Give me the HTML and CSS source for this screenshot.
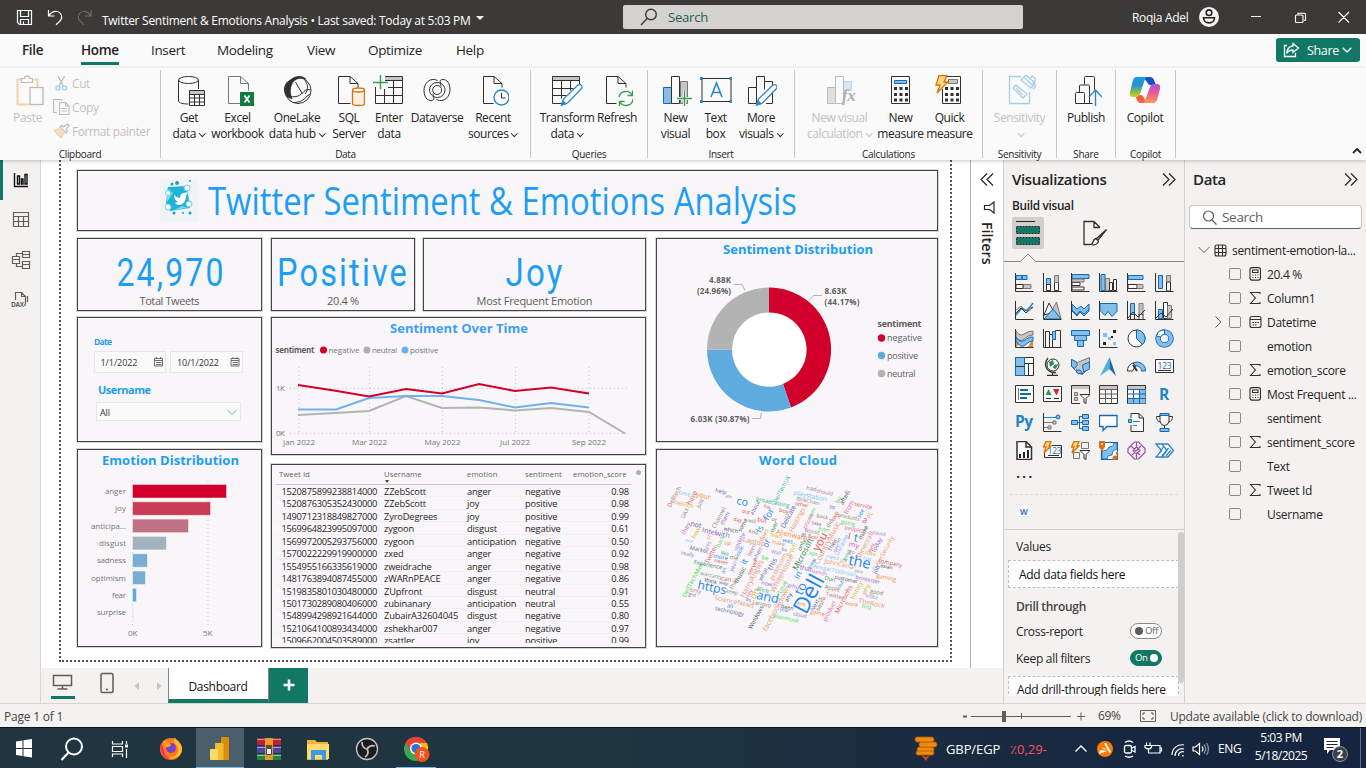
FILE: index.html
```html
<!DOCTYPE html>
<html lang="en">
<head>
<meta charset="utf-8">
<title>Twitter Sentiment &amp; Emotions Analysis</title>
<link rel="stylesheet" href="styles.css">
</head>
<body>
<div class="app">
  <header class="titlebar">
    <div class="tb-left">
      <svg width="94" height="34" fill="none" stroke="#fff" stroke-width="1.2">
        <path d="M17.500 10.500h14v14h-12l-2-2zM20.500 10.500v6h8v-6M20.500 24.500v-5h8v5M23.500 21.500v3"/>
        <path d="M48.500 10v6h6M49 15.500c3-5 9-5.500 11.500-2s1 6-1 8l-3.500 3.200"/>
        <path stroke="#6d6c6b" d="M91 10v6h-6M90.500 15.500c-3-5-8.500-5.500-11-2s-1 6 1 8l3.500 3.200"/>
      </svg>
      <span class="doc">Twitter Sentiment &amp; Emotions Analysis • Last saved: Today at 5:03 PM</span>
      <i class="caret"></i>
    </div>
    <div class="tb-search"><svg width="20" height="20" fill="none" stroke="#3b3a39" stroke-width="1.4"><circle cx="12" cy="7.500" r="5.300"/><path d="M8.200 11.500L2 18"/></svg>Search</div>
    <div class="tb-right">
      <span class="user">Roqia Adel</span>
      <svg width="20" height="20"><circle cx="10" cy="10" r="10" fill="#f3f2f1"/><g fill="none" stroke="#222" stroke-width="1.600"><circle cx="10" cy="5.700" r="2.800"/><path d="M4.500 10.800h11c0 6.700-11 6.700-11 0z"/></g></svg>
      <svg class="win" width="100" height="14" fill="none" stroke="#fff" stroke-width="1.100"><path d="M0 6.500h10M87.500 2l10.500 10.500M98 2L87.500 12.500M47 4.500V3.300h6.500q1 0 1 1v6h-1.500"/><rect x="44.500" y="5" width="7.500" height="7.500" rx="1"/></svg>
    </div>
  </header>

  <nav class="menu">
    <b>File</b><b class="on">Home</b><span>Insert</span><span>Modeling</span><span>View</span><span>Optimize</span><span>Help</span>
    <div class="share"><svg width="17" height="16" fill="none" stroke="#fff" stroke-width="1.300"><path d="M4 3.500H1.500v11h11V11"/><path d="M10 1.500l5.500 4.500-5.500 4.500V8C7 8 5 9 3.800 11.500 4 7 6.500 4.300 10 4z"/></svg><span>Share</span><svg width="10" height="8" fill="none" stroke="#fff" stroke-width="1.300"><path d="M.7 1.700l4.300 4.300 4.300-4.300"/></svg></div>
  </nav>

  <section class="ribbon">
    <div class="grp g-clip"><div class="btns">
      <div class="paste off"><svg width="28" height="32" fill="none" stroke="#bdbbb9"><path stroke="#f4d3a8" stroke-width="2" d="M5 4.500H1.500v25h12M18 4.500h3.500v8"/><path d="M5.500 7.500v-4h3c0-3.500 5-3.500 5 0h3v4z" stroke-width="1.200"/><rect x="14" y="12.500" width="13" height="17" fill="#fafafa" stroke-width="1.300"/></svg><span>Paste</span></div>
      <div class="clip off">
        <div><svg width="17" height="16" fill="none" stroke="#bdbbb9"><path d="M5 1l5.500 10M11.500 1L6 11" stroke-width="1.300"/><circle cx="5" cy="13" r="2" stroke="#a9d3ef" stroke-width="1.500"/><circle cx="11.500" cy="13" r="2" stroke="#a9d3ef" stroke-width="1.500"/></svg>Cut</div>
        <div><svg width="17" height="16" fill="none" stroke="#bdbbb9"><path d="M4 13.500H.6v-13H8l1 1M6.500 3.500h6l3.500 3.500v8.500H6.500zM12.500 3.500V7H16M8.500 9.500h5M8.500 12h5" stroke-width="1.100"/></svg>Copy</div>
        <div><svg width="17" height="16" fill="none" stroke="#bdbbb9"><path d="M1 7.500l5-2 5 5-3 4.500z" fill="#f6dfc5" stroke="#f0c9a0"/><path d="M7 4l6 6 1.500-1.500-1.500-2 3-4-1.500-1.500-4 3-2-1.500z" stroke-width="1.200"/></svg>Format painter</div>
      </div></div><label>Clipboard</label></div>

    <div class="grp g-data"><div class="btns">
      <div class="btn"><svg viewBox="0 0 32 32"><path class="k" d="M5.500 5v21c0 2 5 3 10 3M25.500 5v9"/><ellipse class="k" cx="15.500" cy="5" rx="10" ry="3.500"/><path class="kw" d="M16.500 15.500h15v15h-15z"/><path fill="#c8c6c4" d="M17 16h14v3H17z"/><path class="k" d="M16.500 19.500h15M16.500 23h15M16.500 27h15M21.500 19.500v11M26.500 19.500v11"/></svg><span>Get</span><span>data<i class="ch"></i></span></div>
      <div class="btn"><svg viewBox="0 0 32 32"><path class="k" style="stroke:#797775" d="M18.500 1.500h-12v27h12M18.500 1.500v7h8v7M18.500 1.500l8 7"/><path fill="#107c41" d="M18 17h14v14H18z"/><path stroke="#fff" stroke-width="1.800" d="M22.500 20.500l5 7M27.500 20.500l-5 7"/></svg><span>Excel</span><span>workbook</span></div>
      <div class="btn"><svg viewBox="0 0 32 32"><circle class="k" cx="17" cy="15.500" r="13"/><path fill="#323130" d="M11 3.500C15 0 23 0 26 5c-3-2-8-2-11 0-5 2-7 12-3.500 19C2 23 1 12 6 7z"/><path class="k" d="M14.500 7l7 12M23 4c4 5 5 10 1 15M9 21.500c6 1 10-.500 14-5 2-2 4-2.500 6.500-1.500M12 27.500c6 0 11-2 14-6.500l3-1.500"/></svg><span>OneLake</span><span>data hub<i class="ch"></i></span></div>
      <div class="btn"><svg viewBox="0 0 32 32"><path class="k" d="M17 1.500H5.500v27h12M17 1.500v7h8v4M17 1.500l8 7"/><path fill="#fdeedd" stroke="#d9700c" stroke-width="1.300" d="M19.500 15.500v13.500c0 2 12 2 12 0V15.500"/><ellipse cx="25.500" cy="15" rx="6" ry="2" fill="#fff" stroke="#d9700c" stroke-width="1.300"/></svg><span>SQL</span><span>Server</span></div>
      <div class="btn"><svg viewBox="0 0 32 32"><path fill="#c8c6c4" d="M12 2h17v3H12z"/><path class="k" d="M12 1.500h17.500v27h-27V12M12 5.500h17.500M15 12.500h14.500M3 20.500h26.500M11.500 14v14.500M20.500 5.500v23"/><path stroke="#3a9b52" stroke-width="1.400" d="M7.500 0v14M0 7.500h15"/></svg><span>Enter</span><span>data</span></div>
      <div class="btn"><svg viewBox="0 0 32 32" class="dv"><g class="k"><path d="M16.500 5.500C9 1.500 2.500 9 3 16c.3 6 3 9.500 7 9.500 5 0 2-4 2-7"/><path d="M15.500 24.500c7.500 4 14-3.500 13.500-10.500-.3-6-3-9.500-7-9.500-5 0-2 4-2 7"/><path d="M8.500 15a7.500 7.500 0 0 1 7.500-7.500c5 0 8 4 8 7.500a7.500 7.500 0 0 1-7.500 7.500c-5 0-8-4-8-7.500z"/><circle cx="16.200" cy="15" r="4.500"/></g></svg><span>Dataverse</span></div>
      <div class="btn"><svg viewBox="0 0 32 32"><path class="k" d="M17 1.500H6.500v27h10M17 1.500v7h8v4M17 1.500l8 7"/><circle cx="24.500" cy="22.500" r="7.500" fill="#fff" stroke="#2e86c9" stroke-width="1.400"/><path class="k" d="M24.500 18v5h4"/></svg><span>Recent</span><span>sources<i class="ch"></i></span></div>
    </div><label>Data</label></div>

    <div class="grp g-query"><div class="btns">
      <div class="btn"><svg viewBox="0 0 32 32"><path fill="#c8c6c4" d="M2 2h27v3H2z"/><path class="k" d="M1.500 1.500h27v10M1.500 1.500v27H11M1.500 5.500h27M1.500 13.500h21M1.500 20.500h14M10.500 5.500v18M19.500 5.500v10"/><path class="pen" d="M10.500 30l2-6L27 10c3-1.500 5 1.500 3.500 3.500L16.500 28z"/><path fill="#2e86c9" d="M10 31l2-6 4 4z"/></svg><span>Transform</span><span>data<i class="ch"></i></span></div>
      <div class="btn"><svg viewBox="0 0 32 32"><path class="k" d="M17 1.500H5.500v27h10M17 1.500v7h8v4M17 1.500l8 7"/><g fill="none" stroke="#3a9b52" stroke-width="1.400"><path d="M18 22a7 7 0 0 1 13-2M31.500 15.500v5h-5M32 24a7 7 0 0 1-13 3M18.500 31v-4.500h5"/></g></svg><span>Refresh</span></div>
    </div><label>Queries</label></div>

    <div class="grp g-insert"><div class="btns">
      <div class="btn"><svg viewBox="0 0 32 32"><path class="bb" d="M3.500 12.500h8v16h-8z"/><path class="gg" d="M20.500 6.500h7v22h-7z"/><path class="kw" d="M11.500 1.500h8v27h-8z"/><path stroke="#fafafa" stroke-width="3" d="M24.500 16v14M17 23.500h15"/><path stroke="#3a9b52" stroke-width="1.400" d="M24.500 16v15M17 23.500h15"/></svg><span>New</span><span>visual</span></div>
      <div class="btn"><svg viewBox="0 0 32 32"><path class="k" d="M2 3.500h29v23H2z"/><path fill="#2e86c9" d="M0 2h3v3H0zM29.500 2h3v3h-3zM0 25h3v3H0zM29.500 25h3v3h-3z"/><path fill="none" stroke="#2e86c9" stroke-width="1.600" d="M11 22L16.500 8 22 22M13 17.500h7"/></svg><span>Text</span><span>box</span></div>
      <div class="btn"><svg viewBox="0 0 32 32"><path class="k" d="M3.500 28.500v-16h8M11.500 28.500v-27h8v13M3.500 28.500h8M19.500 6.500h8v5M21 28.500h6.500V18"/><path class="pen" d="M11.500 30l2-6L28 10c3-1.500 5 1.500 3.500 3.500L17.500 28z"/><path fill="#2e86c9" d="M11 31l2-6 4 4z"/></svg><span>More</span><span>visuals<i class="ch"></i></span></div>
    </div><label>Insert</label></div>

    <div class="grp g-calc"><div class="btns">
      <div class="btn off"><svg viewBox="0 0 32 32"><path fill="#e1dfdd" stroke="#bdbbb9" d="M3.500 12.500h8v16h-8z"/><path fill="#d5e8f8" stroke="#b5d5ef" d="M19.500 6.500h8v9h-8z"/><path fill="#fafafa" stroke="#bdbbb9" d="M11.500 1.500h8v27h-8z"/><text x="18" y="26" class="fx">fx</text></svg><span>New visual</span><span>calculation<i class="ch"></i></span></div>
      <div class="btn"><svg viewBox="0 0 32 32"><path class="k" d="M6.500 1.500h18v27h-18z"/><path class="bb" d="M9.500 5.500h12v3h-12z"/><path class="dots" d="M9 13.500h14M9 19.500h14M9 25h14"/></svg><span>New</span><span>measure</span></div>
      <div class="btn"><svg viewBox="0 0 32 32"><path class="k" d="M12 1.500h14.500v27h-18V14"/><path fill="#c8c6c4" stroke="#797775" d="M14.500 4.500h9v4h-9z"/><path class="dots" d="M11 13.500h14M11 19.500h14M11 25h14"/><path class="bolt" d="M5 .5h8L10 7h4L3 18l3-8H2z"/></svg><span>Quick</span><span>measure</span></div>
    </div><label>Calculations</label></div>

    <div class="grp g-sens"><div class="btns"><div class="btn off"><svg viewBox="0 0 32 32" fill="none" stroke="#a5cfe8" stroke-width="1.300"><path d="M17 1.500H5.500v27h20V17"/><path d="M9 13l3-3 11 9-4 4zM12 13l7 7M17 5l5-5 9 8-4 5zM22 0l4 4 2-3 4 3-3 4 3 3-3 3M20 2l9 9" /></svg><span>Sensitivity</span><span><i class="ch"></i></span></div></div><label>Sensitivity</label></div>
    <div class="grp g-share"><div class="btns"><div class="btn"><svg viewBox="0 0 32 32"><path class="k" d="M5.500 28.500v-10q0-1 1-1h7q1 0 1 1v10zM9.500 17v-6q0-1 1-1h8q1 0 1 1v17.500h-5M14.500 9.500v-7q0-1 1-1h8q1 0 1 1v12M14.500 28.500h8"/><path fill="none" stroke="#2e86c9" stroke-width="1.400" d="M25.500 31V15M19 22l6.500-7 6.500 7"/></svg><span>Publish</span></div></div><label>Share</label></div>
    <div class="grp g-cop"><div class="btns"><div class="btn"><svg viewBox="0 0 32 32"><defs>
        <linearGradient id="ca" x1="0" y1="0" x2="0" y2="1"><stop offset="0" stop-color="#0aa5e8"/><stop offset=".4" stop-color="#2b8fd0"/><stop offset=".75" stop-color="#7fc14a"/><stop offset="1" stop-color="#f5c21c"/></linearGradient>
        <linearGradient id="cb" x1="0" y1="0" x2="0" y2="1"><stop offset="0" stop-color="#a94fe0"/><stop offset=".5" stop-color="#ee5c92"/><stop offset="1" stop-color="#fb9b52"/></linearGradient></defs>
        <path fill="#1a4fc8" d="M14 2h7q3 0 4 3l2 5h-6q-2 0-3-3z"/><path fill="#f0603c" d="M18 28h-6q-3 0-4-3l-2-5h6q2 0 3 3z"/>
        <path fill="url(#ca)" d="M7 2h11q-2 1-3 5l-4 12q-1 3-4 3H4q-4 0-3-5L4 5q1-3 3-3z"/><path fill="url(#cb)" d="M25 28H14q2-1 3-5l4-11q1-3 4-3h3q4 0 3 5l-3 11q-1 3-3 3z"/></svg><span>Copilot</span></div></div><label>Copilot</label></div>
    <svg class="collapse" width="10" height="8" fill="none" stroke="#252423" stroke-width="1.800"><path d="M1 6l4-4 4 4"/></svg>
  </section>

  <main class="work">
    <aside class="rail">
      <svg width="40" height="160" fill="none" stroke="#605e5c" stroke-width="1.200">
        <path fill="#117865" stroke="none" d="M0 0h3v40H0z"/>
        <path stroke="#111" stroke-width="1.400" d="M14.500 13v13.500H28M17.500 24v-8h2v8zM21.500 24v-5h1.500v5zM25 24V14.500h2V24z"/>
        <path d="M13.500 52.500h15v14h-15zM13.500 56.500h15M13.500 61.500h15M18.500 56v10.500M23.500 56v10.500"/>
        <path d="M12.500 96.500h7v7h-7zM12.500 99.500h7M22.500 91.500h7v6h-7zM22.500 94.500h7M22.500 101.500h7v7h-7zM22.500 104.500h7M16.500 96.500v-3h6M16.500 103.500v3h6"/>
        <path d="M15.500 140v-7.500h6l4 4v7q0 2-1.500 2M21.500 132.500v4h4M27.500 136v6"/>
        <text x="11" y="147" class="dax">DAX</text>
      </svg>
    </aside>

    <section class="center">
      <div class="stage">
        <div class="page">
          <div class="visual head"><svg viewBox="77 170 861 61">
            <rect x="160" y="179" width="38" height="43" fill="#f1f4f4"/><path fill="#1fb4d8" d="M168 187l19-1 3 22-20 3-4-8z"/><path fill="#78d9ea" d="M167 202l6-9-6-5zM188 208l-14 2 8-4z"/>
            <path fill="#fff" d="M174 195q3 3 6 3 0-5 4-5l4-1-2 4q0 7-6 9-4 0-5-2l3-1q-4-2-4-7z"/>
            <g fill="#f6fbfc" stroke="#6ed0e4"><circle cx="187" cy="188" r="3"/><circle cx="168" cy="193" r="2.500"/><circle cx="168" cy="207" r="3"/><circle cx="189" cy="204" r="3"/></g>
            <g fill="#1a9fc4"><circle cx="172" cy="184" r="1.500"/><circle cx="177" cy="183" r="2"/><circle cx="190" cy="181" r="1"/><circle cx="174" cy="213" r="1.500"/><circle cx="190" cy="213" r="1.500"/><circle cx="183" cy="213" r="1"/></g>
            <text x="208" y="215" textLength="589" lengthAdjust="spacingAndGlyphs" class="bigt">Twitter Sentiment &amp; Emotions Analysis</text></svg></div>
          <div class="cols">
            <div class="col c1">
              <div class="visual v73"><svg viewBox="77 238 185 73"><text class="din" x="116.500" y="286" textLength="109" lengthAdjust="spacingAndGlyphs">24,970</text><text class="sub" x="139.500" y="305" textLength="60">Total Tweets</text></svg></div>
              <div class="visual v125"><svg viewBox="77 317 185 125">
                <text class="bt" x="94" y="345" font-size="8.500" textLength="18">Date</text>
                <g class="inp"><rect x="94.500" y="351.500" width="71" height="21"/><rect x="170.500" y="351.500" width="72" height="21"/><rect x="96.500" y="402.500" width="144" height="18"/></g>
                <text class="it" x="100.500" y="366" textLength="37">1/1/2022</text><text class="it" x="177" y="366" textLength="42">10/1/2022</text>
                <g fill="none" stroke="#605e5c"><path d="M154.500 358.500h8v7.500h-8zM154.500 360.500h8M156 362.500h5.500M156 364.500h5.500M156.500 357v2M160.500 357v2" stroke-width=".9"/><path stroke-width=".9" d="M231 358.500h8v7.500h-8zM231 360.500h8M232.500 362.500h5.500M232.500 364.500h5.500M233 357v2M237 357v2"/><path d="M227.500 410l4.500 4.500 4.500-4.500" stroke="#6aa6d0"/></g>
                <text class="bt" x="98" y="394" font-size="11" textLength="53">Username</text><text class="it" x="100" y="416" textLength="10">All</text></svg></div>
              <div class="visual v198"><svg id="bars" viewBox="77 449 185 198"><text class="bt" x="102" y="465" font-size="13" textLength="137">Emotion Distribution</text>
                <path class="gridl" d="M132.500 480v148M208 480v148"/></svg></div>
            </div>
            <div class="col c2">
              <div class="pair">
                <div class="visual w144"><svg viewBox="271 238 144 73"><text class="din" x="277" y="286" textLength="132" lengthAdjust="spacingAndGlyphs">Positive</text><text class="sub" x="327" y="305" textLength="32">20.4 %</text></svg></div>
                <div class="visual w223"><svg viewBox="423 238 223 73"><text class="din" x="505.500" y="286" textLength="59" lengthAdjust="spacingAndGlyphs">Joy</text><text class="sub" x="476.500" y="305" textLength="116">Most Frequent Emotion</text></svg></div>
              </div>
              <div class="visual v138"><svg viewBox="271 317 375 138">
                <text class="bt b2" x="390" y="333" font-size="13" textLength="138">Sentiment Over Time</text>
                <text class="lg bold" x="275.500" y="353" textLength="39">sentiment</text>
                <circle cx="323.500" cy="350" r="3.500" fill="#d0002a"/><text class="lg" x="328.500" y="353" textLength="31">negative</text>
                <circle cx="367" cy="350" r="3.500" fill="#b0b0b0"/><text class="lg" x="372" y="353" textLength="25">neutral</text>
                <circle cx="405" cy="350" r="3.500" fill="#6fb1f0"/><text class="lg" x="410" y="353" textLength="28.500">positive</text>
                <path class="gridl" d="M299 367v67M369.500 367v67M442.500 367v67M515.500 367v67M589 367v67M290 388.500h340M290 433.500h340"/>
                <text class="lg" x="276" y="391" textLength="9">1K</text><text class="lg" x="276" y="436" textLength="9">0K</text>
                <text class="lg" x="283" y="445" textLength="32">Jan 2022</text><text class="lg" x="352" y="445" textLength="35">Mar 2022</text><text class="lg" x="424.500" y="445" textLength="36">May 2022</text><text class="lg" x="500" y="445" textLength="30">Jul 2022</text><text class="lg" x="572" y="445" textLength="34">Sep 2022</text>
                <g fill="none" stroke-width="2"><path stroke="#b3b3b3" d="M298 415l37-2 34-2 37-15 36 12 37-.500 36 3 36-2.500 38 4 36 21.500"/><path stroke="#6fb1f0" d="M298 409.500h38l33-11.500 37-2h36l37 4 36 7.500 36-4.500 38 4.500"/><path stroke="#d0002a" d="M298 385l36 5.500 35 6 37-7.500 36 4.500 37-9.500 36 7 36-3.500 38 6"/></g></svg></div>
              <div class="visual tbl"><div class="thead"><span>Tweet Id</span><span class="sort">Username</span><span>emotion</span><span>sentiment</span><span>emotion_score</span></div><div class="tbody" id="rows"></div><i class="thumb"></i></div>
            </div>
            <div class="col c3">
              <div class="visual v204"><svg viewBox="656 238 282 204">
                <text class="bt" x="723" y="254" font-size="13" textLength="150">Sentiment Distribution</text>
                <circle cx="769" cy="349.500" r="37" fill="#fff"/>
                <path fill="#d0002a" d="M769 287.500a62 62 0 0 1 22 120l-8-23.500a37 37 0 0 0-14-71.500z"/>
                <path fill="#5fabe0" d="M791 407.500a62 62 0 0 1-84-58h25a37 37 0 0 0 51 34.500z"/>
                <path fill="#b3b3b3" d="M707 349.500a62 62 0 0 1 62-62v25a37 37 0 0 0-37 37z"/>
                <path fill="none" stroke="#b3b3b3" d="M733.500 284.500h8.500l3 6M822 295.500h-8.500l-4.500 5M752 418.500h8.500l1-6"/>
                <g class="dl"><text x="709" y="283" textLength="22">4.88K</text><text x="697" y="294" textLength="34">(24.96%)</text><text x="824.500" y="294" textLength="22">8.63K</text><text x="824.500" y="305" textLength="35">(44.17%)</text><text x="690.500" y="422" textLength="59">6.03K (30.87%)</text></g>
                <text class="leg bold" x="877.500" y="327" textLength="44">sentiment</text>
                <circle cx="881.500" cy="338" r="3.700" fill="#d0002a"/><text class="leg" x="887" y="341" textLength="35">negative</text>
                <circle cx="881.500" cy="355.500" r="3.700" fill="#5fabe0"/><text class="leg" x="887" y="359" textLength="31">positive</text>
                <circle cx="881.500" cy="373.500" r="3.700" fill="#b3b3b3"/><text class="leg" x="887" y="377" textLength="28.500">neutral</text></svg></div>
              <div class="visual v198"><svg viewBox="656 449 282 198"><text class="bt" x="759" y="465" font-size="13" textLength="78">Word Cloud</text><g id="cloud" transform="translate(650 445) scale(.33333)"></g></svg></div>
            </div>
          </div>
        </div>
      </div>
      <div class="tabs">
        <svg width="127" height="35" fill="none" stroke="#605e5c" stroke-width="1.500"><path d="M12.500 7.500h18v10h-18zM21.500 17.500v3M16.500 21h10"/><path fill="#117865" stroke="none" d="M10 28h24v3H10z"/><rect x="60" y="5.500" width="12" height="19" rx="1.500"/><path d="M65 21.500h2"/><path fill="#c8c6c4" stroke="none" d="M98 14v8l-4.500-4zM116 14v8l4.500-4z"/></svg>
        <div class="tab">Dashboard</div><div class="plus"><svg width="12" height="12"><path stroke="#fff" stroke-width="2.600" d="M6 0.500v11M.5 6h11"/></svg></div>
      </div>
    </section>

    <aside class="filters"><svg width="14" height="13" class="dbl"><path d="M7 .5l-6 6 6 6M13 .5l-6 6 6 6"/></svg><svg class="fun" width="12" height="13"><path d="M11 1v11L6.500 8.500H1.500v-4h5z"/></svg><b>Filters</b></aside>

    <aside class="viz">
      <div class="ptitle"><b>Visualizations</b><svg width="14" height="13" class="dbl"><path d="M1 .5l6 6-6 6M7 .5l6 6-6 6"/></svg></div>
      <b class="bv">Build visual</b>
      <div class="modes">
        <svg width="32" height="32"><rect width="32" height="32" rx="2" fill="#d2d0ce"/><path stroke="#252423" d="M4 4.500h19"/><path fill="#117865" stroke="#252423" stroke-dasharray="2 1" d="M4.500 9.500h23v7h-23zM4.500 20.500h23v7h-23z"/></svg>
        <svg width="26" height="26" fill="none" stroke="#323130" stroke-width="1.300"><path d="M12 1.500H2v23h6M12 1.500v6h6M12 1.500l6 6M24.500 9.500L14 19M16 20L24.500 9.500M14 18.500l2.500 2.500c0 3-4 4.500-7.500 3.500 3-1 1-5 5-6z"/></svg>
      </div>
      <svg class="ptr" width="180" height="9" fill="none" stroke="#8a8886"><path d="M0 8.500h16.500L24 1l7.500 7.500H180"/></svg>
      <div class="vgrid" id="viz"></div>
      <div class="more">···</div>
      <div class="custom"><svg width="18" height="14"><path fill="#fff" stroke="#e8e8e8" d="M4 12.500C-.500 12-.5 6 4 6c1-7 9-7 10 0 4.500 0 4.500 6 0 6.500z"/><text x="5" y="11" class="wtx">W</text></svg></div>
      <div class="wells">
        <span>Values</span><div class="well">Add data fields here</div>
        <b>Drill through</b>
        <div class="opt"><span>Cross-report</span><i class="tg"><u></u>Off</i></div>
        <div class="opt"><span>Keep all filters</span><i class="tg tgon">On<u></u></i></div>
        <div class="well w2">Add drill-through fields here</div>
      </div>
      <i class="vscroll"></i>
    </aside>

    <aside class="data">
      <div class="ptitle"><b>Data</b><svg width="14" height="13" class="dbl"><path d="M1 .5l6 6-6 6M7 .5l6 6-6 6"/></svg></div>
      <div class="dsearch"><svg width="15" height="15" fill="none" stroke="#605e5c" stroke-width="1.200"><circle cx="6.500" cy="6" r="5"/><path d="M10 10l4.500 4.500"/></svg>Search</div>
      <div class="fields" id="fields"></div>
    </aside>
  </main>

  <footer class="status"><span class="pg">Page 1 of 1</span>
    <svg width="130" height="24" fill="none" stroke="#605e5c"><path d="M1 12.500h4" stroke-width="2"/><path d="M9 12.500h100M59.500 9v6M115 12.500h8M119 8.500v8"/><path fill="#605e5c" stroke="none" d="M40 7h4v11h-4z"/></svg>
    <span class="pct">69%</span>
    <svg width="16" height="12" fill="none" stroke="#605e5c"><path d="M.5.500h15v11H.5z"/><path stroke="#444" d="M3 5V3h2M11 3h2v2M13 7v2h-2M5 9H3V7"/></svg>
    <span class="upd">Update available (click to download)</span>
  </footer>

  <footer class="taskbar">
    <svg width="440" height="41">
      <path fill="#fff" d="M16 13.500l6.500-1v7.500H16zM23.500 12.300l8.500-1.300v9h-8.500zM16 21h6.500v7l-6.500-1zM23.500 21H32v8.500l-8.500-1.300z"/>
      <g fill="none" stroke="#fff" stroke-width="2"><circle cx="74" cy="18.500" r="8"/><path d="M68.500 24.500L61.500 32"/></g>
      <g fill="none" stroke="#fff" stroke-width="1.200"><path d="M112.500 13v3h10v-3M112.500 29v-3h10v3M112.500 18.500h10v5h-10zM126.500 13v3M126.500 21v9"/></g><path fill="#fff" d="M125 16.500h3v3h-3z"/>
      <g><circle cx="171" cy="21" r="11" fill="#ff7a1c"/><path fill="#ffbe2e" d="M175 9c0 4 8 7 7 13-1 7-9 10-14 8 6 0 11-4 10-10-1-4-6-5-3-11z"/><path fill="#fb2f55" d="M161 15c-2 9 3 17 11 17-5-2-8-5-8-10z"/><circle cx="171" cy="20" r="5" fill="#7f3fd0"/><path fill="#ff9a22" d="M163 13c3-1 7 1 8 4-2 3-3 1-6 3z"/></g>
      <path fill="#4a5f69" d="M196 0h48v41h-48z"/><path fill="#76b9ed" d="M196 39h48v2h-48zM396 39h40v2h-40z"/>
      <rect x="221" y="9" width="8" height="23" rx="1" fill="#d98b0a"/><rect x="215" y="15" width="8.500" height="17" rx="1" fill="#f0bd2c"/><rect x="210" y="21" width="8" height="11" rx="1" fill="#fada68"/>
      <path fill="#bb2338" d="M257 10h24v7h-24z"/><path fill="#4a46a8" d="M257 18h24v7h-24z"/><path fill="#26863d" d="M257 26h24v6h-24z"/><path fill="#ddd" opacity=".6" d="M257 11h24v1h-24zM257 19h24v1h-24zM257 27h24v1h-24z"/><path fill="#e39b32" d="M265 10h8v22h-8z"/><path fill="#7b4310" d="M266 17h6v3h-6z"/><path fill="#eee" stroke="#444" d="M266.500 20.500h5v6h-5z"/>
      <path fill="#f0b433" d="M307 12h8l2 2h11v18h-21z"/><path fill="#ffda70" d="M307 16h22v15h-22z"/><path fill="#3b9be0" d="M311 22h15v10h-4v-5h-7v5h-4z"/>
      <circle cx="367" cy="21" r="10.500" fill="#1c1c1e" stroke="#c4c4c4" stroke-width="1.300"/><g fill="none" stroke="#bfbfbf" stroke-width="1.800"><path d="M362 14c0 5 2 6 5 7M375 18c-4-1-6 0-8 3M365 29c3-2 4-5 2-8"/></g>
      <circle cx="416" cy="21" r="12" fill="#35a853"/><path fill="#ea4335" d="M405.500 15a12 12 0 0 1 21 0H416l-5 9z"/><path fill="#fbbc05" d="M427 15c3 7 0 16-9 18l3-9-1-9z"/><circle cx="416" cy="20.500" r="6" fill="#fff"/><circle cx="416" cy="20.500" r="4.600" fill="#2d73e0"/><circle cx="422" cy="26.500" r="7.500" fill="#f4511e"/><text x="419.200" y="30" class="rr">R</text>
    </svg>
    <div class="tray">
      <svg width="24" height="28" viewBox="0 0 24 28"><g fill="#f08a10" stroke="#b35c05" stroke-width=".8"><rect x="3" y="12" width="17" height="5" rx="2.500"/><rect x="5" y="7" width="18" height="5" rx="2.500"/><rect x="1" y="2" width="19" height="5" rx="2.500"/><rect x="2" y="16" width="18" height="4" rx="2"/></g><path fill="#d2401a" d="M7 20l5 2 4-2-4 6z"/></svg>
      <span class="cur">GBP/EGP</span><span class="neg">٪0,29-</span>
      <svg class="ti" width="136" height="24" fill="none" stroke="#fff" stroke-width="1.300"><path d="M1.500 14.500L7 9l5.500 5.500"/><circle cx="31" cy="12" r="8" fill="#ff7800" stroke="none"/><path fill="#fff" stroke="none" d="M30 6.500l2-.500 5 9-1.500 1zM26 13l7 1-8 3zM28 10l6 3-5-1z"/><rect x="50.500" y="8.500" width="7" height="7.500" rx="1.500"/><path d="M58 11l3-1.500v5.500l-3-1.500M51 5.500q4-3 8 0M51 19q4 2.500 8 0"/><path d="M78 8.500h8v7.500H74.500M85.500 11h2v3h-2M72.500 5.500v3M76 5.500v3M71 8.500h6.500v2q-3 3-6.500 0zM74.500 12v4" stroke-width="1.200"/><path stroke-width="1.200" d="M98 18a10 10 0 0 1 12-10M101 19a7 7 0 0 1 9-7M104.500 19a4 4 0 0 1 5.500-4"/><path fill="#fff" d="M108 18h1.500v1.500H108z" stroke="none"/><path stroke-width="1.200" d="M119 10h2.500l4-3.500v11l-4-3.500H119zM128 9.500q2 2.500 0 5"/><path stroke="#8492a0" d="M130 7.500q3.500 4.500 0 9M132.500 6q4 6 0 12"/></svg>
      <span class="eng">ENG</span>
      <div class="clock"><span>5:03 PM</span><span>5/18/2025</span></div>
      <svg class="note" width="26" height="28"><path fill="#fff" d="M1 3h16v12H7l-3 4v-4H1z"/><path stroke="#1b2a40" d="M3.500 6.500h11M3.500 9.500h11M3.500 12.500h7"/><circle cx="17" cy="19" r="7.500" fill="#39414c" stroke="#8e959c"/><text x="13.800" y="23" class="n2">2</text></svg>
      <i class="peek"></i>
    </div>
  </footer>
</div>
<script src="app.js"></script>
</body>
</html>
```

FILE: styles.css
```css
* { box-sizing: border-box; }
body { margin: 0; font-family: "Open Sans", "Noto Sans", sans-serif; font-size: 12px; letter-spacing: -0.3px; color: #252423; }
svg { display: block; flex: none; }
b { font-weight: 600; }
i { font-style: normal; }
u { text-decoration: none; }
.app { width: 1366px; height: 768px; display: flex; flex-direction: column; overflow: hidden; }

/* title bar */
.titlebar { height: 34px; background: #3b3a39; color: #fff; display: flex; align-items: center; flex: none; }
.tb-left { width: 623px; display: flex; align-items: center; }
.doc { margin: 7px 0 0 8px; width: 369px; white-space: nowrap; font-size: 12px; letter-spacing: -0.270px; line-height: 16px; }
.caret { border: 4.500px solid transparent; border-top-color: #fff; border-bottom: 0; margin: 1px 0 0 5px; }
.tb-search { width: 400px; height: 24px; border-radius: 2px; background: #d4d3d1; color: #1f5e50; font-size: 13.200px; display: flex; align-items: center; padding-left: 16px; gap: 9px; }
.tb-right { flex: 1; display: flex; align-items: center; padding-left: 109px; }
.user { width: 57px; white-space: nowrap; margin-right: 10px; font-size: 12px; }
.win { margin-left: 32px; }

/* menu */
.menu { height: 34px; background: #fafafa; display: grid; grid-template-columns: 59px 70px 66px 90px 61px 88px 60px 1fr; padding: 0 0 2px 22px; align-items: center; font-size: 13.500px; flex: none; letter-spacing: -0.350px; }
.menu .on { position: relative; }
.menu .on::after { content: ""; position: absolute; left: 0; bottom: -6px; width: 38px; height: 3px; background: #117865; }
.share { justify-self: end; margin-right: 6px; width: 84px; height: 24px; background: #117865; border-radius: 3px; color: #fff; display: flex; align-items: center; padding-left: 7px; font-size: 12.500px; }
.share span { margin-left: 7px; width: 35px; }

/* ribbon */
.ribbon { height: 92px; background: #fafafa; display: flex; flex: none; position: relative; z-index: 2; box-shadow: 0 1px 4px rgba(0,0,0,.22); }
.grp { display: flex; flex-direction: column; height: 88px; margin-top: 2px; border-right: 1px solid #c8c6c4; }
.btns { display: flex; height: 75px; padding-top: 5px; flex: none; }
.grp label { text-align: center; font-size: 10px; line-height: 16px; height: 16px; letter-spacing: -0.3px; margin-top: 1px; }
.g-clip { width: 161px; } .g-data { width: 370px; } .g-query { width: 117px; } .g-insert { width: 147px; }
.g-calc { width: 188px; } .g-sens { width: 74px; } .g-share { width: 59px; } .g-cop { width: 60px; }
.btn { display: flex; flex-direction: column; align-items: center; white-space: nowrap; line-height: 16px; font-size: 12px; letter-spacing: -0.420px; flex: none; }
.btn svg { width: 32px; height: 32px; margin-bottom: 3px; position: relative; left: 0; }
.btn .dv { width: 34px; }
.g-data .btn:nth-child(1) { width: 56px; } .g-data .btn:nth-child(2) { width: 41px; } .g-data .btn:nth-child(3) { width: 78px; }
.g-data .btn:nth-child(4) { width: 26px; } .g-data .btn:nth-child(5) { width: 54px; } .g-data .btn:nth-child(6) { width: 42px; } .g-data .btn:nth-child(7) { width: 70px; }
.g-query .btn:nth-child(1) { width: 72px; } .g-query .btn:nth-child(2) { width: 28px; }
.g-insert .btn:nth-child(1) { width: 55px; } .g-insert .btn:nth-child(2) { width: 25px; } .g-insert .btn:nth-child(3) { width: 66px; }
.g-calc .btn:nth-child(1) { width: 89px; } .g-calc .btn:nth-child(2) { width: 33px; } .g-calc .btn:nth-child(3) { width: 65px; }
.g-sens .btn { width: 73px; } .g-share .btn { width: 58px; } .g-cop .btn { width: 58px; }
.off { color: #c3c1bf; }
.ch { display: inline-block; width: 4.500px; height: 4.500px; border: solid currentColor; border-width: 0 1.400px 1.400px 0; transform: rotate(45deg); margin: 0 1px 2.500px 4px; }
.paste { width: 53px; padding-left: 16px; }
.paste span { display: block; margin: 3px 0 0 -3px; line-height: 16px; }
.clip { display: flex; flex-direction: column; margin-top: -4px; height: 72px; letter-spacing: -0.4px; }
.clip div { height: 24px; display: flex; align-items: center; gap: 2px; white-space: nowrap; }
.collapse { position: absolute; right: 4px; bottom: 5px; }
.k { fill: none; stroke: #323130; stroke-width: 1; }
.kw { fill: #fafafa; stroke: #323130; }
.bb { fill: #83beec; stroke: #1767b3; }
.gg { fill: #c8c6c4; stroke: #797775; }
.pen { fill: #fff; stroke: #2e86c9; stroke-width: 1.300; }
.dots { fill: none; stroke: #323130; stroke-width: 3; stroke-dasharray: 3 2.500; }
.bolt { fill: #fcd980; stroke: #d9700c; stroke-width: 1.300; }
.fx { font: italic bold 17px "Liberation Serif", serif; fill: #b3b0ad; }

/* work area */
.work { display: flex; height: 543px; flex: none; }
.rail { width: 41px; background: #f3f2f1; border-right: 1px solid #d8d6d4; }
.dax { font: bold 6.500px "Open Sans", sans-serif; fill: #605e5c; stroke: none; }
.center { width: 929px; display: flex; flex-direction: column; }
.stage { height: 508px; background: #fff; padding-left: 18px; }
.page { width: 893px; height: 502px; border: 2px dotted #555; border-top: 0; padding: 9px 0 0 16px; }
.visual { background: #f8f6f8; border: 1px solid #444; box-shadow: 0 0 0 1px #d6d6d6; overflow: hidden; position: relative; flex: none; }
.visual > svg { margin: -1px; }
.head { width: 861px; height: 61px; margin-bottom: 7px; margin-top: 1px; }
.head > svg { width: 861px; height: 61px; }
.cols { display: flex; gap: 9px; }
.col { display: flex; flex-direction: column; }
.c1 { width: 185px; } .c2 { width: 376px; gap: 6px; } .c3 { width: 282px; gap: 7px; }
.c1 .v125 { margin: 6px 0 7px; }
.v73 { height: 73px; } .v125 { height: 125px; } .v198 { height: 198px; } .v204 { height: 204px; } .v138 { height: 138px; width: 375px; }
.pair { display: flex; gap: 8px; } .w144 { width: 144px; height: 73px; } .w223 { width: 223px; height: 73px; }
.visual text { letter-spacing: 0; }
.bigt { font-size: 38.500px; font-weight: 400; fill: #1e9df5; }
.visual .din { font: 38px Roboto, sans-serif; fill: #1e9df5; letter-spacing: 2.500px; }
.sub { font-size: 11px; fill: #605e5c; }
.bt { font-weight: 700; fill: #1e9df5; } .b2 { fill: #409dff; }
.inp rect { fill: #fbfafb; stroke: #e8e6e8; }
.it { font-size: 9px; fill: #333; }
.lg { font-size: 8px; fill: #777; } .bold { font-weight: 700; fill: #605e5c; }
.leg { font-size: 9px; fill: #605e5c; }
.dl { font-size: 8px; font-weight: 700; fill: #605e5c; }
.gridl { fill: none; stroke: #c9c7c9; stroke-dasharray: 1 3; }
.tbl { width: 375px; height: 184px; margin-top: 3px; padding: 0 14px 0 4px; font-size: 9.300px; letter-spacing: -0.150px; }
.thead, .row { display: grid; grid-template-columns: 108px 83px 58px 48px 1fr; }
.thead { height: 20px; border-bottom: 1px solid #c8c6c4; font-size: 7.800px; color: #666; line-height: 19px; padding-left: 3px; letter-spacing: 0; }
.thead { grid-template-columns: 105px 83px 58px 48px 1fr; white-space: nowrap; }
.sort { position: relative; }
.sort::after { content: ""; position: absolute; left: 1px; top: 15px; border: 2.500px solid transparent; border-top: 3px solid #444; border-bottom: 0; }
.tbody { height: 158px; overflow: hidden; }
.row { height: 12.450px; line-height: 13px; color: #252423; border-bottom: 1px solid #f1eff1; white-space: nowrap; }
.row span:first-child { text-align: right; padding-right: 7px; letter-spacing: -0.290px; }
.row span:last-child { text-align: right; padding-right: 2px; }
.thumb { position: absolute; right: 4px; top: 5px; width: 5px; height: 5px; border-radius: 3px; background: #b0aeb0; }

.tabs { height: 35px; background: #f3f2f1; display: flex; }
.tab { width: 101px; background: #fff; border-left: 1px solid #8a8886; border-right: 1px solid #8a8886; border-bottom: 4px solid #117865; text-align: center; line-height: 37px; font-size: 12px; color: #111; padding-right: 1px; }
.plus { width: 39px; background: #117865; display: flex; align-items: center; justify-content: center; padding-bottom: 2px; }

/* right panes */
.dbl { fill: none; stroke: #252423; stroke-width: 1.200; }
.filters { width: 33px; background: linear-gradient(#fff 0 508px, #f3f2f1 508px); position: relative; display: flex; flex-direction: column; align-items: center; padding-top: 13px; }
.filters::before { content: ""; position: absolute; left: 0; top: 0; width: 1px; height: 508px; background: #b3b0ad; }
.fun { margin: 15px 0 8px 4px; fill: none; stroke: #252423; stroke-width: 1.200; }
.filters b { writing-mode: vertical-rl; font-size: 14.300px; line-height: 16px; letter-spacing: 0; }
.viz { width: 182px; background: #f3f2f1; border-left: 1px solid #d2d0ce; border-right: 1px solid #d2d0ce; position: relative; overflow: hidden; }
.ptitle { display: flex; justify-content: space-between; align-items: center; height: 38px; padding: 0 8px; font-size: 15px; letter-spacing: -0.350px; }
.bv { display: block; padding-left: 8px; line-height: 15px; font-size: 11.800px; }
.modes { display: flex; align-items: center; gap: 38px; padding: 4px 8px 4px; }
.ptr { margin-bottom: 11px; }
.vgrid { display: grid; grid-template-columns: repeat(6, 28px); grid-auto-rows: 28px; padding-left: 11px; }
.vgrid svg { width: 19px; height: 19px; }
.rt { font: bold 15.500px "Open Sans", sans-serif; fill: #2283c5; letter-spacing: 0; }
.n3 { font: 8.500px "Open Sans", sans-serif; fill: #1767b3; stroke: none; letter-spacing: -.2px; }
.more { padding-left: 12px; font-size: 15px; font-weight: 600; line-height: 15px; height: 25px; letter-spacing: 2px; }
.custom { border-top: 1px dashed #dddbd9; margin: 0 6px; height: 35px; padding: 9px 0 0 5px; }
.wtx { font: bold 8px "Open Sans", sans-serif; fill: #3f79b5; }
.wells { border-top: 1px solid #d2d0ce; padding: 9px 5px 0 4px; height: 167px; overflow: hidden; display: flex; flex-direction: column; }
.wells > span, .wells > b { padding-left: 8px; line-height: 16px; }
.well { height: 28px; margin-top: 5px; background: #fff; border: 1px dashed #c0bebc; line-height: 27px; padding-left: 10px; font-size: 12px; flex: none; color: #111; white-space: nowrap; }
.wells > b { margin-top: 11px; color: #444; }
.opt { display: flex; justify-content: space-between; padding: 0 17px 0 8px; margin-top: 8px; height: 17px; line-height: 17px; }
.opt + .opt { margin-top: 10px; }
.w2 { margin-top: 9px; padding-left: 8px; line-height: 25px; }
.tg { width: 32px; height: 16px; border: 1px solid #8a8886; border-radius: 8px; background: #fff; font-size: 9.500px; line-height: 14px; display: flex; align-items: center; gap: 2px; padding-left: 4px; color: #605e5c; }
.tg u { width: 8px; height: 8px; border-radius: 4px; background: #605e5c; }
.tgon { background: #117865; border-color: #117865; color: #fff; }
.tgon u { background: #fff; }
.vscroll { position: absolute; right: 0; top: 372px; width: 6px; height: 151px; border-radius: 3px; background: #d0cecc; }
.data { width: 181px; background: #f3f2f1; }
.data .ptitle { padding: 0 8px 0 8px; }
.dsearch { margin: 7px 4px 9px 4px; height: 24px; border: 1px solid #c8c6c4; border-bottom: 1px solid #605e5c; border-radius: 4px; background: #fff; display: flex; align-items: center; gap: 5px; padding-left: 12px; font-size: 13.500px; color: #605e5c; }
.field { height: 24px; display: grid; grid-template-columns: 16px 19px 18px 1fr; align-items: center; padding-left: 29px; white-space: nowrap; }
.field.root { grid-template-columns: 16px 18px 1fr; padding-left: 13px; }
.field .cb { width: 12px; height: 12px; border: 1px solid #8a8886; border-radius: 2px; margin-left: -1px; }
.field .fi { fill: none; stroke: #323130; stroke-width: 1.100; }

/* status bar */
.status { height: 24px; background: #f3f2f1; border-top: 1px solid #d8d6d4; display: flex; align-items: center; color: #484644; flex: none; white-space: nowrap; }
.pg { width: 962px; padding: 2px 0 0 4px; letter-spacing: -0.2px; }
.pct { width: 48px; padding-left: 6px; }
.upd { margin-left: 14px; padding-top: 2px; letter-spacing: -0.240px; }

/* taskbar */
.taskbar { height: 41px; border-top: 1px solid #0c1519; background: linear-gradient(90deg, #20353f 0%, #1f3540 45%, #182940 75%, #16243f 100%); display: flex; justify-content: space-between; color: #fff; }
.rr { font: 9px "Open Sans", sans-serif; fill: #fff; }
.tray { display: flex; align-items: center; height: 41px; width: 452px; white-space: nowrap; letter-spacing: 0; }
.cur { margin-left: 8px; width: 64px; font-size: 13px; letter-spacing: -.1px; }
.neg { color: #f0555c; font-size: 13px; width: 40px; font-family: "Open Sans", "DejaVu Sans", sans-serif; letter-spacing: 0; direction: ltr; unicode-bidi: bidi-override; }
.ti { margin-left: 24px; }
.eng { margin-left: 8px; width: 25px; font-size: 12px; letter-spacing: -.3px; }
.clock { margin-left: 7px; width: 62px; display: flex; flex-direction: column; align-items: center; font-size: 12px; line-height: 18px; letter-spacing: -.5px; margin-top: -3px; }
.note { margin: 1px 0 0 11px; }
.n2 { font: bold 11px "Open Sans", sans-serif; fill: #fff; }
.peek { width: 1px; height: 41px; background: #64707c; margin-left: 11px; }
```

FILE: app.js
```js
const $ = id => document.getElementById(id);

/* tweet table */
$('rows').innerHTML = `1520875899238814000|ZZebScott|anger|negative|0.98
1520876305352430000|ZZebScott|joy|positive|0.98
1490712318849827000|ZyroDegrees|joy|positive|0.99
1569964823995097000|zygoon|disgust|negative|0.61
1569972005293756000|zygoon|anticipation|negative|0.50
1570022229919900000|zxed|anger|negative|0.92
1554955166335619000|zweidrache|anger|negative|0.98
1481763894087455000|zWARnPEACE|anger|negative|0.86
1519835801030480000|ZUpfront|disgust|neutral|0.91
1501730289080406000|zubinanary|anticipation|neutral|0.55
1548994298921644000|ZubairA32604045|disgust|negative|0.80
1521064100893434000|zshekhar007|anger|negative|0.97
1509662004503589000|zsattler|joy|positive|0.99`.split('\n')
  .map(r => '<div class="row">' + r.split('|').map(c => `<span>${c}</span>`).join('') + '</div>').join('');

/* emotion bars: label, label width, bar width, colour */
$('bars').innerHTML += [['anger',21,94,'#d0002a'],['joy',11,78,'#c93b55'],['anticipa...',35,56,'#c07282'],['disgust',27,34,'#a3b2bc'],
  ['sadness',29,15,'#79aed3'],['optimism',35,13,'#79aed3'],['fear',14,4,'#5fabe0'],['surprise',29,1,'#b5d3e8']]
  .map(([t, w, b, c], i) => { const y = 484.5 + i * 17.3;
    return `<rect x="132.500" y="${y}" width="${b}" height="13.500" fill="${c}" stroke="#fff" stroke-opacity=".45"/><text class="lg" x="${126 - w}" y="${y + 9.5}" textLength="${w}">${t}</text>`; }).join('')
  + '<text class="lg" x="128" y="636" textLength="9.500">0K</text><text class="lg" x="203" y="636" textLength="9.500">5K</text>';

/* visual type icons */
const ax = '<path class="k" d="M.5 0v18.500H18.500"/>';
const icons = [
  '<path class="bb" d="M1 2.500h6v4H1zM7 2.500h5v4H7z"/><path class="gg" d="M8 11.500h8v4H8z"/><path class="kw" d="M1 11.500h7v4H1z"/>' + ax,
  '<path class="bb" d="M3.500 5.500h4v6h-4z"/><path class="kw" d="M3.500 11.500h4v6h-4zM11.500 9.500h4v8h-4z"/><path class="gg" d="M11.500 2.500h4v7h-4z"/>' + ax,
  '<path class="bb" d="M1 1.500h17v4H1z"/><path class="kw" d="M1 9.500h8v3H1zM1 14h12v3H1z"/><path class="gg" d="M1 6h12v3H1z"/>' + ax,
  '<path class="bb" d="M2 1.500h4v16H2z"/><path class="gg" d="M6.500 5.500h4v12h-4z"/><path class="kw" d="M10.500 9.500h3v8h-3zM14.500 6.500h3v11h-3z"/>' + ax,
  '<path class="bb" d="M1 2.500h15v4H1z"/><path class="kw" d="M1 11.500h9v4H1z"/><path class="gg" d="M10 11.500h6v4h-6z"/>' + ax,
  '<path class="bb" d="M3.500 2.500h4v13h-4z"/><path class="kw" d="M11.500 9h4v9h-4z"/><path class="gg" d="M11.500 2.500h4v6h-4z"/>' + ax,
  '<path fill="none" stroke="#797775" d="M1 9l5-4 4 5 5-4 3 1"/><path fill="none" stroke="#1784c9" stroke-width="1.300" d="M1 14l6-7 5 3 6-8"/><path class="k" d="M1 12l5-5 5 5 7-6"/>' + ax,
  '<path class="gg" d="M7 13L13.500 1 18 18z"/><path class="kw" d="M1 14L6 2l5 9z"/><path class="bb" d="M1 18l9-10 8 10z"/>' + ax,
  '<path class="bb" d="M1 3l5 5 4-3 3 3 5-5v7l-5 5-4-4-3 4-5-5z"/><path fill="none" stroke="#1767b3" d="M1 9l5 5 3-4 4 3 5-5"/>' + ax,
  '<path class="bb" d="M1 2.500h17v8l-5 5-4-5-3 4-5-5z"/>' + ax,
  '<path class="bb" d="M3.500 2.500h4v11h-4z"/><path class="gg" d="M12 2.500h4v11h-4z"/><path class="k" d="M3.500 12v6M7.500 12v6M12 13v5M16 13v5M1 17l5-6 5 5 7-7"/>' + ax,
  '<path class="bb" d="M3.500 8.500h4v9h-4z"/><path class="kw" d="M8.500 1.500h4v16h-4z"/><path class="gg" d="M12.500 4.500h4v13h-4z"/><path class="k" d="M1 17l5-5 5 4 7-8"/>' + ax,
  '<path class="gg" d="M1 2q4 6 8 3t9-3v4q-5 0-9 4T1 8z"/><path fill="#e88a35" d="M1 10l5 4-5 4zM18 9v9h-5z"/><path class="bb" d="M1 8q4 7 9 3t8-3v4q-4 0-8 4T1 12z"/>' + ax,
  '<path class="k" d="M2.500 18v-15.500h4v15.500M9.500 18v-7M12.500 11v-9.500h5v17M6.500 5.500h6"/><path class="bb" d="M9.500 2.500h3v8h-3z"/>' + ax,
  '<path class="bb" d="M.5 1.500h18v5H.5zM3.500 6.500h12v5h-12zM6.500 11.500h6v6h-6z"/>',
  '<path fill="#252423" d="M14 1h3v3h-3zM4 13h3v3H4zM12 7h2v2h-2z"/><path fill="#83beec" d="M4 4h4v4H4zM9 8h3v3H9zM14 13h3v3h-3z"/>' + ax,
  '<circle class="kw" cx="9.500" cy="9.500" r="8.500"/><path class="bb" d="M9.500 1a8.500 8.500 0 0 1 6 14.500l-6-6z"/>',
  '<circle cx="9.500" cy="9.500" r="6.500" fill="none" stroke="#1767b3" stroke-width="5.500"/><circle cx="9.500" cy="9.500" r="6.500" fill="none" stroke="#83beec" stroke-width="3.800"/><path fill="#fff" stroke="#1767b3" d="M9.500 1a8 8 0 0 0-8 6l4 1q1-2 4-3z"/>',
  '<path class="kw" d="M.5.500h18v18H.5z"/><path class="bb" d="M.5.500h9v18h-9z"/><path class="k" d="M.5 9.500h9M9.500 6.500h9M13.500 6.500v12"/>',
  '<circle class="kw" cx="10" cy="8" r="6"/><path fill="#2b8a55" d="M6 5l4-2 1 4-4 3zM11 8l4-1-2 5-3-1z"/><path fill="none" stroke="#323130" stroke-width="1.300" d="M5 1C0 7 3 16 13 15.500M9.500 15v3M4 18.500h11"/>',
  '<path class="gg" d="M.5 2.500l6 3 12-5v10l-7 7-5-2-6-6z"/><path class="bb" d="M.5 2.500q5 1 6 5l-3 4-3-2zM11.500 8l7-3v7l-6 3zM5 13h4l3 4-6-1z"/>',
  '<path fill="#4fb3d9" d="M10.500 0L1 19l9.500-7z"/><path fill="#1b6aa3" d="M10.500 0L17 19l-6.500-7z"/>',
  '<path class="bb" d="M6 6a8.500 8.500 0 0 1 12.500 8h-4a5 5 0 0 0-6-5z"/><path class="kw" d="M.5 14A8.500 8.500 0 0 1 6 6l2.500 3-3 5z"/><path fill="none" stroke="#323130" stroke-width="2" d="M10 14L6 8"/>',
  '<path class="kw" d="M.5 2.500h18v13H.5z"/><text x="2.500" y="11.500" class="n3">123</text><path class="k" d="M3 13.500h13"/>',
  '<path class="kw" d="M.5.500h18v17H.5z"/><path stroke="#797775" d="M3.500 3v12"/><path stroke="#1767b3" stroke-width="2" d="M5 5h8M5 9h11M5 13h7"/>',
  '<path class="kw" d="M.5 1.500h18v15H.5z"/><path fill="#2b9c5a" d="M2.500 10L5.500 4l3 6z"/><path fill="#d8262c" d="M10 4h6.500l-3 6.500z"/><path class="k" d="M3 13.500h5M11 13.500h5"/>',
  '<path class="k" d="M9 18.500H.500V.5h18v8"/><path fill="#c8c6c4" d="M1 1h17v3H1z"/><path class="gg" d="M3.500 7.500h3v3h-3zM3.500 12.500h3v3h-3z"/><path class="kw" d="M9 9.500h10l-4 4v5l-2-1v-4z"/>',
  '<path class="kw" d="M.5.500h18v18H.5z"/><path fill="#c8c6c4" d="M1 1h17v3H1z"/><path stroke="#605e5c" d="M.5 4.500h18M.5 9h18M.5 13.500h18M6.500 4v14.500M12.500 4v14.500"/>',
  '<path class="kw" d="M.5.500h18v18H.5z"/><path fill="#c8c6c4" d="M1 1h17v3H1z"/><path fill="#83beec" d="M13 4h5.500v14.500H1V14h12z"/><path stroke="#1767b3" d="M.5 4.500h18M.5 9h18M.5 13.500h18M6.500 4v14.500M12.500 4v14.500"/>',
  '<text x="4" y="15" class="rt" textLength="9.500">R</text>',
  '<text x="0" y="14" class="rt" textLength="18">Py</text>',
  '<path class="k" style="stroke:#797775" d="M1 9.500h9M1 14.500h4"/><path stroke="#1784c9" d="M1 4.500h12"/><circle class="bb" cx="15" cy="4" r="2"/><path class="gg" d="M10 8h3v3h-3zM5 13h3v3H5z"/>' + ax,
  '<path stroke="#1767b3" fill="none" d="M5 9.500h7M8.500 3v13M8.500 3.500h4M8.500 15.500h4"/><path class="bb" d="M.5 7.500h6v4h-6zM11.500 1.500h6v4h-6zM11.500 7.500h6v4h-6zM11.500 13.500h6v4h-6z"/>',
  '<path fill="#fff" stroke="#1767b3" stroke-width="1.300" d="M.5 2.500h17.500v11H8L4 17.500v-4H.5z"/>',
  '<path class="kw" d="M4 5V.500h8l4.500 4.500v13.500H4V12M12 .5V5h4.500"/><path class="bb" d="M1.500 6.500h3v3h-3z"/><path stroke="#1784c9" d="M6 8.500h7M6 12.500h4"/>',
  '<path class="kw" d="M5 1.500h9v7q-1 4-4.500 4T5 8.500zM5 3.500H1.500q0 5 4 5.500M14 3.500h3.500q0 5-4 5.500M9.500 12.500v3"/><path class="bb" d="M5 .500h9v2H5zM5 15.500h9v3H5z"/>',
  '<path class="kw" stroke-width="1.500" d="M2 .500h9l5.500 5.500v12.500H2zM11 .5V6h5.500"/><path fill="#252423" d="M4 13h2v4H4zM8 11h2v6H8zM12 9h2v8h-2z"/>',
  '<path class="kw" d="M9 4.500h9.500v12H1.500V12"/><text x="4.500" y="13" class="n3">123</text><path class="k" d="M5 14.500h11"/><path class="bolt" d="M3 .500h5L6 5h2L1 12l2-6H.5z"/>',
  '<path class="k" style="stroke:#797775" d="M10.500 1.500h7v6h-7zM2.500 11.500h6v6h-6z"/><path class="kw" d="M9 9.500h10l-4 4v5l-2-1v-4z"/><path class="bolt" d="M3 .500h5L6 5h2L1 12l2-6H.5z"/>',
  '<path fill="#fff" stroke="#1767b3" stroke-width="1.200" d="M2.500 1.500h16v17h-16z"/><path fill="#83beec" stroke="#1767b3" stroke-width=".8" d="M3 10l5-1 2-3 4-1 1-3h3v6l-4 2-1 4-4 1-1 3H3z"/><path fill="#d9700c" d="M0 0h6v6l-3 4-3-4z"/><circle cx="3" cy="3" r="1" fill="#fff"/><path fill="#d9700c" d="M17 11h2.500v2.500H17z"/><circle cx="16" cy="17" r="2.500" fill="#d9700c"/>',
  '<g fill="none" stroke="#9b4fa6" stroke-width="1.200"><path d="M7.500 1h4l6.500 6.500v4L11.500 18h-4L1 11.500v-4z"/><path d="M9.500 1v5L6 9.500 9.500 13v5M9.500 6L13 9.500 9.500 13M4 5l9 9M14 5l-9 9"/></g>',
  '<g fill="#fff" stroke="#2e86c9" stroke-width="1.300"><path d="M1 3h12l5.500 6.500L13 16H1l5.500-6.500z"/><path fill="none" d="M7 3l5 6.500L7 16M9 5l-4 6M13.500 7L7 15M16 9l-5 6"/></g>'
];
$('viz').innerHTML = icons.map(p => `<svg viewBox="0 0 19 19">${p}</svg>`).join('');

/* field list */
const calc = '<rect x="1" y=".6" width="10.500" height="12.500" rx="2"/><path d="M3.500 3h5.500v2.500H3.500zM3.500 8h1M6 8h1M8.500 8h1M3.500 10.500h1M6 10.500h1M8.500 10.500h1"/>';
const sum = '<path d="M11 3V1.500H1.500L6.500 7l-5 5.500H11V11"/>';
const cal = '<rect x="1" y="1.500" width="11" height="11" rx="2"/><path d="M1 4.500h11M3.500 7.500h1.500M6 7.500h1.500M8.500 7.500h1.500M3.500 10h1.500M6 10h1.500"/>';
$('fields').innerHTML = '<div class="field root"><svg width="12" height="8" fill="none" stroke="#605e5c"><path d="M.5 1l5.500 5.500L11.500 1"/></svg><svg class="fi" width="13" height="13"><rect x="1" y="1" width="11" height="11" rx="2"/><path d="M1 4.500h11M1 8.500h11M4.500 1v11M8.500 1v11"/></svg><span>sentiment-emotion-la...</span></div>'
  + [['20.4 %', calc], ['Column1', sum], ['Datetime', cal, 1], ['emotion', ''], ['emotion_score', sum], ['Most Frequent ...', calc], ['sentiment', ''], ['sentiment_score', sum], ['Text', ''], ['Tweet Id', sum], ['Username', '']]
  .map(([t, ic, ex]) => `<div class="field"><svg width="9" height="12" fill="none" stroke="#605e5c">${ex ? '<path d="M1.500.500L7 6l-5.500 5.500"/>' : ''}</svg><i class="cb"></i><svg class="fi" width="13" height="14">${ic}</svg><span>${t}</span></div>`).join('');

/* word cloud: text, centre x, centre y, font size, direction (0 across, 1 up), colour */
const C = { b:'#1e88f0', r:'#d9534f', s:'#e9967a', o:'#f28c38', p:'#8a63b8', n:'#5a6aa8', g:'#888', k:'#4a4a58', t:'#2fae90', l:'#45dd55', y:'#d6b52a', m:'#e05fb0', c:'#79c8f2', v:'#a478e0', d:'#8c7b55', w:'#bd7486', e:'#2e8b57' };
$('cloud').innerHTML = `Dell,477,447,68,1,b|the,629,351,44,0,b|and,353,456,38,0,b|https,186,428,36,0,b|to,452,431,38,1,b|co,277,170,32,0,b|you,510,290,34,1,r|for,356,208,28,1,b|is,330,252,26,1,b|in,444,390,26,1,b|it,283,350,26,1,b|I,598,273,28,0,r|t,618,278,34,0,b|a,645,225,28,0,m|my,612,300,22,0,m|on,314,446,26,1,y|of,350,296,24,1,b|with,218,268,22,0,p|that,468,370,20,0,p|this,367,357,22,1,n|Microsoft,459,327,24,1,e|CountryMusic,532,294,22,1,s|JohnCena,567,357,20,0,s|AnsgarTOdinson,555,377,17,0,c|TheRock,665,475,20,0,s|ScienceNews,253,470,20,0,s|HarryAngles,306,401,22,1,s|facebookdown,379,490,22,1,s|WhiteHouse,396,385,22,1,s|pcdotcom,385,365,19,1,s|Alienware,425,270,21,0,o|Laptop,312,290,21,0,s|Intel,178,259,21,0,p|not,138,239,21,0,n|your,160,152,21,0,o|have,126,158,20,1,r|Dellrich,101,178,17,0,y|DellTechMex,128,405,19,1,l|playstation,481,153,20,0,c|broadcasting,368,172,17,0,t|DellTechUK,395,133,17,1,t|Delltech,73,155,18,1,w|time,104,146,17,0,c|help,213,139,17,0,n|am,236,154,14,0,g|had,484,131,17,0,g|should,524,142,16,0,w|BlokChain,474,168,15,0,g|other,455,179,16,0,r|he,351,185,16,0,w|about,315,188,17,1,n|out,288,200,16,0,r|buy,402,197,17,0,r|but,336,225,18,0,r|will,306,228,16,0,g|day,263,224,16,0,r|or,373,223,16,0,d|Channel,207,218,18,1,g|which,243,255,16,0,k|And,310,261,16,0,d|then,378,272,17,0,y|was,413,288,17,0,b|make,385,294,16,0,o|Wall,378,322,15,0,v|be,403,314,14,0,b|so,547,186,17,0,n|service,640,182,17,0,r|products,596,216,16,0,d|going,594,234,17,0,l|people,610,252,16,0,w|could,687,265,16,0,v|back,517,215,16,0,d|take,500,236,15,0,p|even,522,253,16,0,l|would,486,259,16,0,g|at,461,269,17,0,n|Best,489,276,15,0,r|xps,490,326,16,0,l|need,548,337,16,0,c|us,581,345,17,0,y|go,606,321,15,0,d|data,661,325,16,0,y|has,652,341,15,0,c|Market,147,314,17,0,n|our,118,287,15,0,c|really,113,327,16,0,g|more,212,336,18,0,b|like,224,325,16,0,t|me,252,338,18,0,d|never,214,350,16,0,r|be,345,338,18,0,l|Experience,174,359,17,0,e|warranty,184,391,16,0,g|can,229,402,18,0,r|think,182,408,16,0,k|way,221,414,15,0,n|keep,246,441,16,0,g|only,137,437,17,0,w|got,127,449,15,0,p|all,240,483,17,0,b|technology,239,499,17,0,n|Lenovo,335,477,17,0,d|now,350,416,17,0,p|Alice,338,434,18,0,t|who,430,423,18,0,v|Dun,540,402,17,0,e|customer,589,403,16,0,k|brintester,653,404,16,0,p|also,626,379,14,0,g|company,721,354,17,0,r|asian,709,365,15,0,k|gaming,709,398,18,0,o|Apple,547,430,17,0,d|Twitter,555,453,17,0,w|good,680,442,17,0,d|India,665,455,16,0,v|work,605,477,17,0,o|first,650,486,17,0,l|game,503,504,17,0,o|are,454,477,17,0,o|HP,516,462,16,0,d|been,412,487,16,0,k|year,403,495,14,0,b|cloud,450,510,16,0,p|elonmusk,408,520,17,0,l|Windows,318,517,18,1,k|as,296,464,16,0,p|laptops,509,382,14,0,m|Delicate,415,215,20,1,n|Hastings,441,225,20,1,s|from,426,314,20,1,y|Love,398,426,19,1,l|Ukraine,575,300,19,1,c|Minecraft,645,300,21,1,s|CyberSecurity,700,325,18,1,s|Microsofts,581,463,19,1,r|product,538,498,18,1,m|history,620,436,18,1,y|what,340,388,18,1,n|music,270,390,19,1,k|update,268,290,18,1,v|Twitter,183,328,18,1,r|back,211,290,16,1,l|up,233,294,17,0,o|how,138,264,18,1,y|they,108,250,19,1,m|just,150,175,17,1,d|DAX,105,205,17,1,g|them,225,220,17,1,p|some,278,240,17,1,k|over,372,245,17,1,e|does,342,270,18,1,o|when,322,328,17,1,p|been,305,315,17,1,w|only,455,300,18,1,e|phone,475,228,17,1,m|store,485,205,15,1,l|did,539,235,17,1,d|two,555,213,17,1,r|PC,660,211,17,1,o|see,632,205,17,1,b|from,597,187,19,1,m|by,566,165,19,1,l|after,583,160,18,1,k|re,593,141,17,0,m|make,640,262,18,1,k|today,681,300,18,1,p|job,679,373,18,1,b|why,648,433,18,1,y|out,571,418,16,1,b|any,415,457,17,1,k|new,486,355,16,1,b|year,250,363,17,1,v|an,221,376,16,1,b|than,251,415,17,1,d|Hey,297,448,17,1,m|Next,495,480,17,1,n|best,510,482,17,1,d|server,308,366,18,1,r|look,268,320,17,1,b|yes,173,300,16,1,v|of,177,277,15,1,o|Their,548,300,17,1,k|on,565,287,15,1,g|one,558,310,15,1,v|good,590,330,15,1,t|data,664,308,14,1,r`.split('|')
  .map(w => { const [t, x, y, s, d, c] = w.split(',');
    return `<text text-anchor="middle" font-weight="${s < 25 ? 500 : 400}" transform="translate(${x} ${y}) rotate(${+d ? -62 : 12})" y="${s * .33}" font-size="${s}" fill="${C[c]}">${t}</text>`; }).join('');
```
